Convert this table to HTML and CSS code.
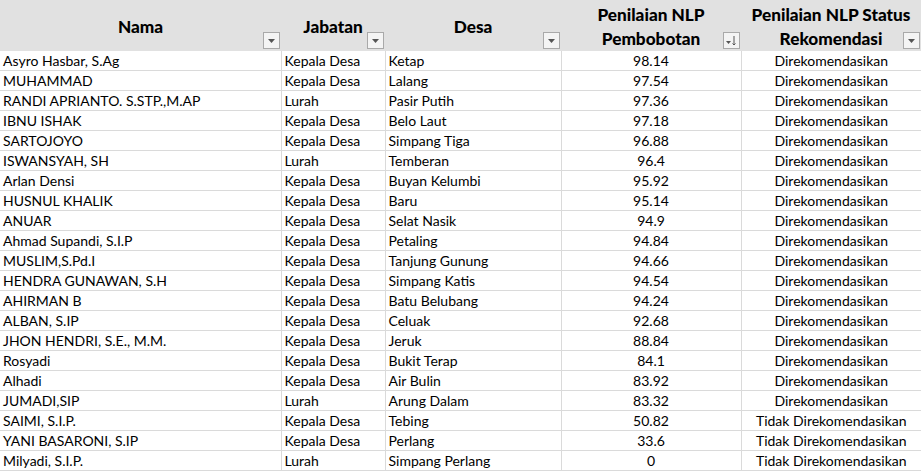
FILE: index.html
```html
<!DOCTYPE html>
<html>
<head>
<meta charset="utf-8">
<link rel="stylesheet" href="styles.css">
</head>
<body>
<table class="sheet">
  <colgroup>
    <col class="c-nama"><col class="c-jab"><col class="c-desa"><col class="c-nilai"><col class="c-status">
  </colgroup>
  <thead>
    <tr>
      <th><span class="htext">Nama</span><span class="fbtn"><svg width="7" height="4" viewBox="0 0 7 4"><path d="M0 0H7L3.5 4Z" fill="#555"/></svg></span></th>
      <th><span class="htext">Jabatan</span><span class="fbtn"><svg width="7" height="4" viewBox="0 0 7 4"><path d="M0 0H7L3.5 4Z" fill="#555"/></svg></span></th>
      <th><span class="htext">Desa</span><span class="fbtn"><svg width="7" height="4" viewBox="0 0 7 4"><path d="M0 0H7L3.5 4Z" fill="#555"/></svg></span></th>
      <th><span class="htext">Penilaian NLP<br>Pembobotan</span><span class="fbtn"><svg width="11" height="11" viewBox="0 0 11 11"><path d="M0 6H5L2.5 9Z" fill="#555"/><path d="M8 1V10M6.5 8.5L8 10L9.5 8.5" stroke="#555" stroke-width="1" fill="none"/></svg></span></th>
      <th><span class="htext">Penilaian NLP Status<br>Rekomendasi</span><span class="fbtn"><svg width="7" height="4" viewBox="0 0 7 4"><path d="M0 0H7L3.5 4Z" fill="#555"/></svg></span></th>
    </tr>
  </thead>
  <tbody>
    <tr><td>Asyro Hasbar, S.Ag</td><td>Kepala Desa</td><td>Ketap</td><td class="ctr">98.14</td><td class="ctr">Direkomendasikan</td></tr>
    <tr><td>MUHAMMAD</td><td>Kepala Desa</td><td>Lalang</td><td class="ctr">97.54</td><td class="ctr">Direkomendasikan</td></tr>
    <tr><td>RANDI APRIANTO. S.STP.,M.AP</td><td>Lurah</td><td>Pasir Putih</td><td class="ctr">97.36</td><td class="ctr">Direkomendasikan</td></tr>
    <tr><td>IBNU ISHAK</td><td>Kepala Desa</td><td>Belo Laut</td><td class="ctr">97.18</td><td class="ctr">Direkomendasikan</td></tr>
    <tr><td>SARTOJOYO</td><td>Kepala Desa</td><td>Simpang Tiga</td><td class="ctr">96.88</td><td class="ctr">Direkomendasikan</td></tr>
    <tr><td>ISWANSYAH, SH</td><td>Lurah</td><td>Temberan</td><td class="ctr">96.4</td><td class="ctr">Direkomendasikan</td></tr>
    <tr><td>Arlan Densi</td><td>Kepala Desa</td><td>Buyan Kelumbi</td><td class="ctr">95.92</td><td class="ctr">Direkomendasikan</td></tr>
    <tr><td>HUSNUL KHALIK</td><td>Kepala Desa</td><td>Baru</td><td class="ctr">95.14</td><td class="ctr">Direkomendasikan</td></tr>
    <tr><td>ANUAR</td><td>Kepala Desa</td><td>Selat Nasik</td><td class="ctr">94.9</td><td class="ctr">Direkomendasikan</td></tr>
    <tr><td>Ahmad Supandi, S.I.P</td><td>Kepala Desa</td><td>Petaling</td><td class="ctr">94.84</td><td class="ctr">Direkomendasikan</td></tr>
    <tr><td>MUSLIM,S.Pd.I</td><td>Kepala Desa</td><td>Tanjung Gunung</td><td class="ctr">94.66</td><td class="ctr">Direkomendasikan</td></tr>
    <tr><td>HENDRA GUNAWAN, S.H</td><td>Kepala Desa</td><td>Simpang Katis</td><td class="ctr">94.54</td><td class="ctr">Direkomendasikan</td></tr>
    <tr><td>AHIRMAN B</td><td>Kepala Desa</td><td>Batu Belubang</td><td class="ctr">94.24</td><td class="ctr">Direkomendasikan</td></tr>
    <tr><td>ALBAN, S.IP</td><td>Kepala Desa</td><td>Celuak</td><td class="ctr">92.68</td><td class="ctr">Direkomendasikan</td></tr>
    <tr><td>JHON HENDRI, S.E., M.M.</td><td>Kepala Desa</td><td>Jeruk</td><td class="ctr">88.84</td><td class="ctr">Direkomendasikan</td></tr>
    <tr><td>Rosyadi</td><td>Kepala Desa</td><td>Bukit Terap</td><td class="ctr">84.1</td><td class="ctr">Direkomendasikan</td></tr>
    <tr><td>Alhadi</td><td>Kepala Desa</td><td>Air Bulin</td><td class="ctr">83.92</td><td class="ctr">Direkomendasikan</td></tr>
    <tr><td>JUMADI,SIP</td><td>Lurah</td><td>Arung Dalam</td><td class="ctr">83.32</td><td class="ctr">Direkomendasikan</td></tr>
    <tr><td>SAIMI, S.I.P.</td><td>Kepala Desa</td><td>Tebing</td><td class="ctr">50.82</td><td class="ctr">Tidak Direkomendasikan</td></tr>
    <tr><td>YANI BASARONI, S.IP</td><td>Kepala Desa</td><td>Perlang</td><td class="ctr">33.6</td><td class="ctr">Tidak Direkomendasikan</td></tr>
    <tr><td>Milyadi, S.I.P.</td><td>Lurah</td><td>Simpang Perlang</td><td class="ctr">0</td><td class="ctr">Tidak Direkomendasikan</td></tr>
  </tbody>
</table>
</body>
</html>
```
FILE: styles.css
```css
html, body {
  margin: 0;
  padding: 0;
  background: #ffffff;
}
.sheet {
  border-collapse: collapse;
  table-layout: fixed;
  width: 921px;
  font-family: Lato, "Open Sans", sans-serif;
  color: #000;
}
.c-nama { width: 281px; }
.c-jab { width: 104px; }
.c-desa { width: 176px; }
.c-nilai { width: 180px; }
.c-status { width: 180px; }
.sheet th {
  position: relative;
  height: 51px;
  padding: 0;
  background: #e1e1e1;
  font-size: 17.2px;
  font-weight: 900;
  line-height: 24px;
  text-align: center;
  vertical-align: middle;
  border: none;
}
.htext { display: block; padding-top: 3px; }
.fbtn {
  position: absolute;
  right: 1px;
  bottom: 2px;
  width: 15px;
  height: 15px;
  border: 1px solid #a9a9a9;
  background: #f4f4f4;
  display: flex;
  align-items: center;
  justify-content: center;
}
.sheet td {
  height: 19px;
  padding: 0 3px;
  font-size: 14px;
  line-height: 19px;
  white-space: nowrap;
  overflow: hidden;
  border-bottom: 1px solid #dadada;
  border-left: 1px solid #dadada;
}
.sheet td:first-child { border-left: none; }
.sheet td.ctr { text-align: center; }
```
